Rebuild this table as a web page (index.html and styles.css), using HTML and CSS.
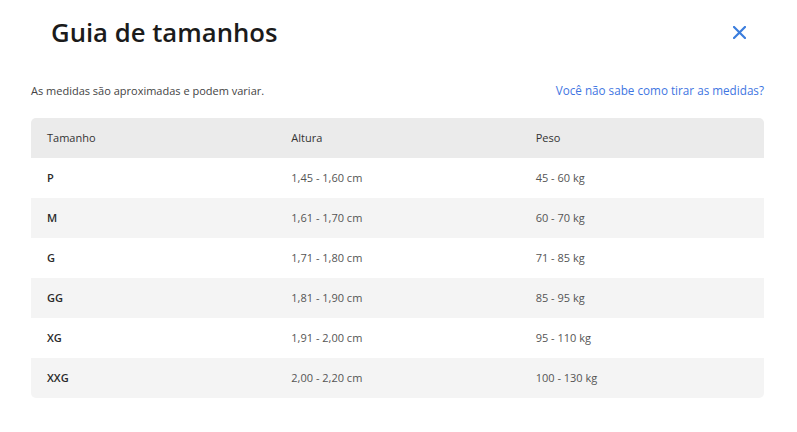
FILE: index.html
```html
<!DOCTYPE html>
<html lang="pt-BR">
<head>
<meta charset="utf-8">
<title>Guia de tamanhos</title>
<link rel="stylesheet" href="styles.css">
</head>
<body>
<div class="modal">
  <div class="modal-header">
    <h1 class="title">Guia de tamanhos</h1>
    <button class="close" aria-label="Fechar">
      <svg width="13" height="13" viewBox="0 0 13 13"><path d="M1 1L12 12M12 1L1 12" stroke="#3b7ddd" stroke-width="2.2" stroke-linecap="square"/></svg>
    </button>
  </div>
  <div class="info">
    <span class="note">As medidas são aproximadas e podem variar.</span>
    <a class="link" href="#">Você não sabe como tirar as medidas?</a>
  </div>
  <div class="table">
    <div class="row head"><div>Tamanho</div><div>Altura</div><div>Peso</div></div>
    <div class="row"><div class="size">P</div><div>1,45 - 1,60 cm</div><div>45 - 60 kg</div></div>
    <div class="row alt"><div class="size">M</div><div>1,61 - 1,70 cm</div><div>60 - 70 kg</div></div>
    <div class="row"><div class="size">G</div><div>1,71 - 1,80 cm</div><div>71 - 85 kg</div></div>
    <div class="row alt"><div class="size">GG</div><div>1,81 - 1,90 cm</div><div>85 - 95 kg</div></div>
    <div class="row"><div class="size">XG</div><div>1,91 - 2,00 cm</div><div>95 - 110 kg</div></div>
    <div class="row alt"><div class="size">XXG</div><div>2,00 - 2,20 cm</div><div>100 - 130 kg</div></div>
  </div>
</div>
</body>
</html>
```
FILE: styles.css
```css
html, body {
  margin: 0;
  padding: 0;
  background: #fff;
}
body {
  font-family: "Open Sans", "Liberation Sans", sans-serif;
  color: #333;
}
.modal {
  padding: 0 33px 0 31px;
}
.modal-header {
  display: flex;
  justify-content: space-between;
  align-items: center;
  height: 64px;
}
.title {
  margin: 0 0 0 20px;
  font-size: 25.7px;
  font-weight: 600;
  color: #1b1b1b;
  letter-spacing: 0;
}
.close {
  background: none;
  border: 0;
  padding: 0;
  margin-right: 18px;
  width: 13px;
  height: 13px;
  display: flex;
}
.info {
  display: flex;
  justify-content: space-between;
  align-items: center;
  margin-top: 16px;
  height: 20px;
  font-size: 11px;
}
.note {
  color: #444;
}
.link {
  color: #3f76e2;
  text-decoration: none;
  font-size: 11.7px;
}
.table {
  margin-top: 18px;
  border-radius: 5px;
  overflow: hidden;
  font-size: 11px;
}
.row {
  display: grid;
  grid-template-columns: 1fr 1fr 1fr;
  height: 40px;
  align-items: center;
  color: #555;
  line-height: 14px;
}
.row > div {
  padding: 0 16px;
  margin-top: -1px;
}
.row.head {
  background: #ebebeb;
  color: #333;
}
.row.alt {
  background: #f4f4f4;
}
.size {
  color: #2a2a2a;
  font-weight: 600;
}
```
